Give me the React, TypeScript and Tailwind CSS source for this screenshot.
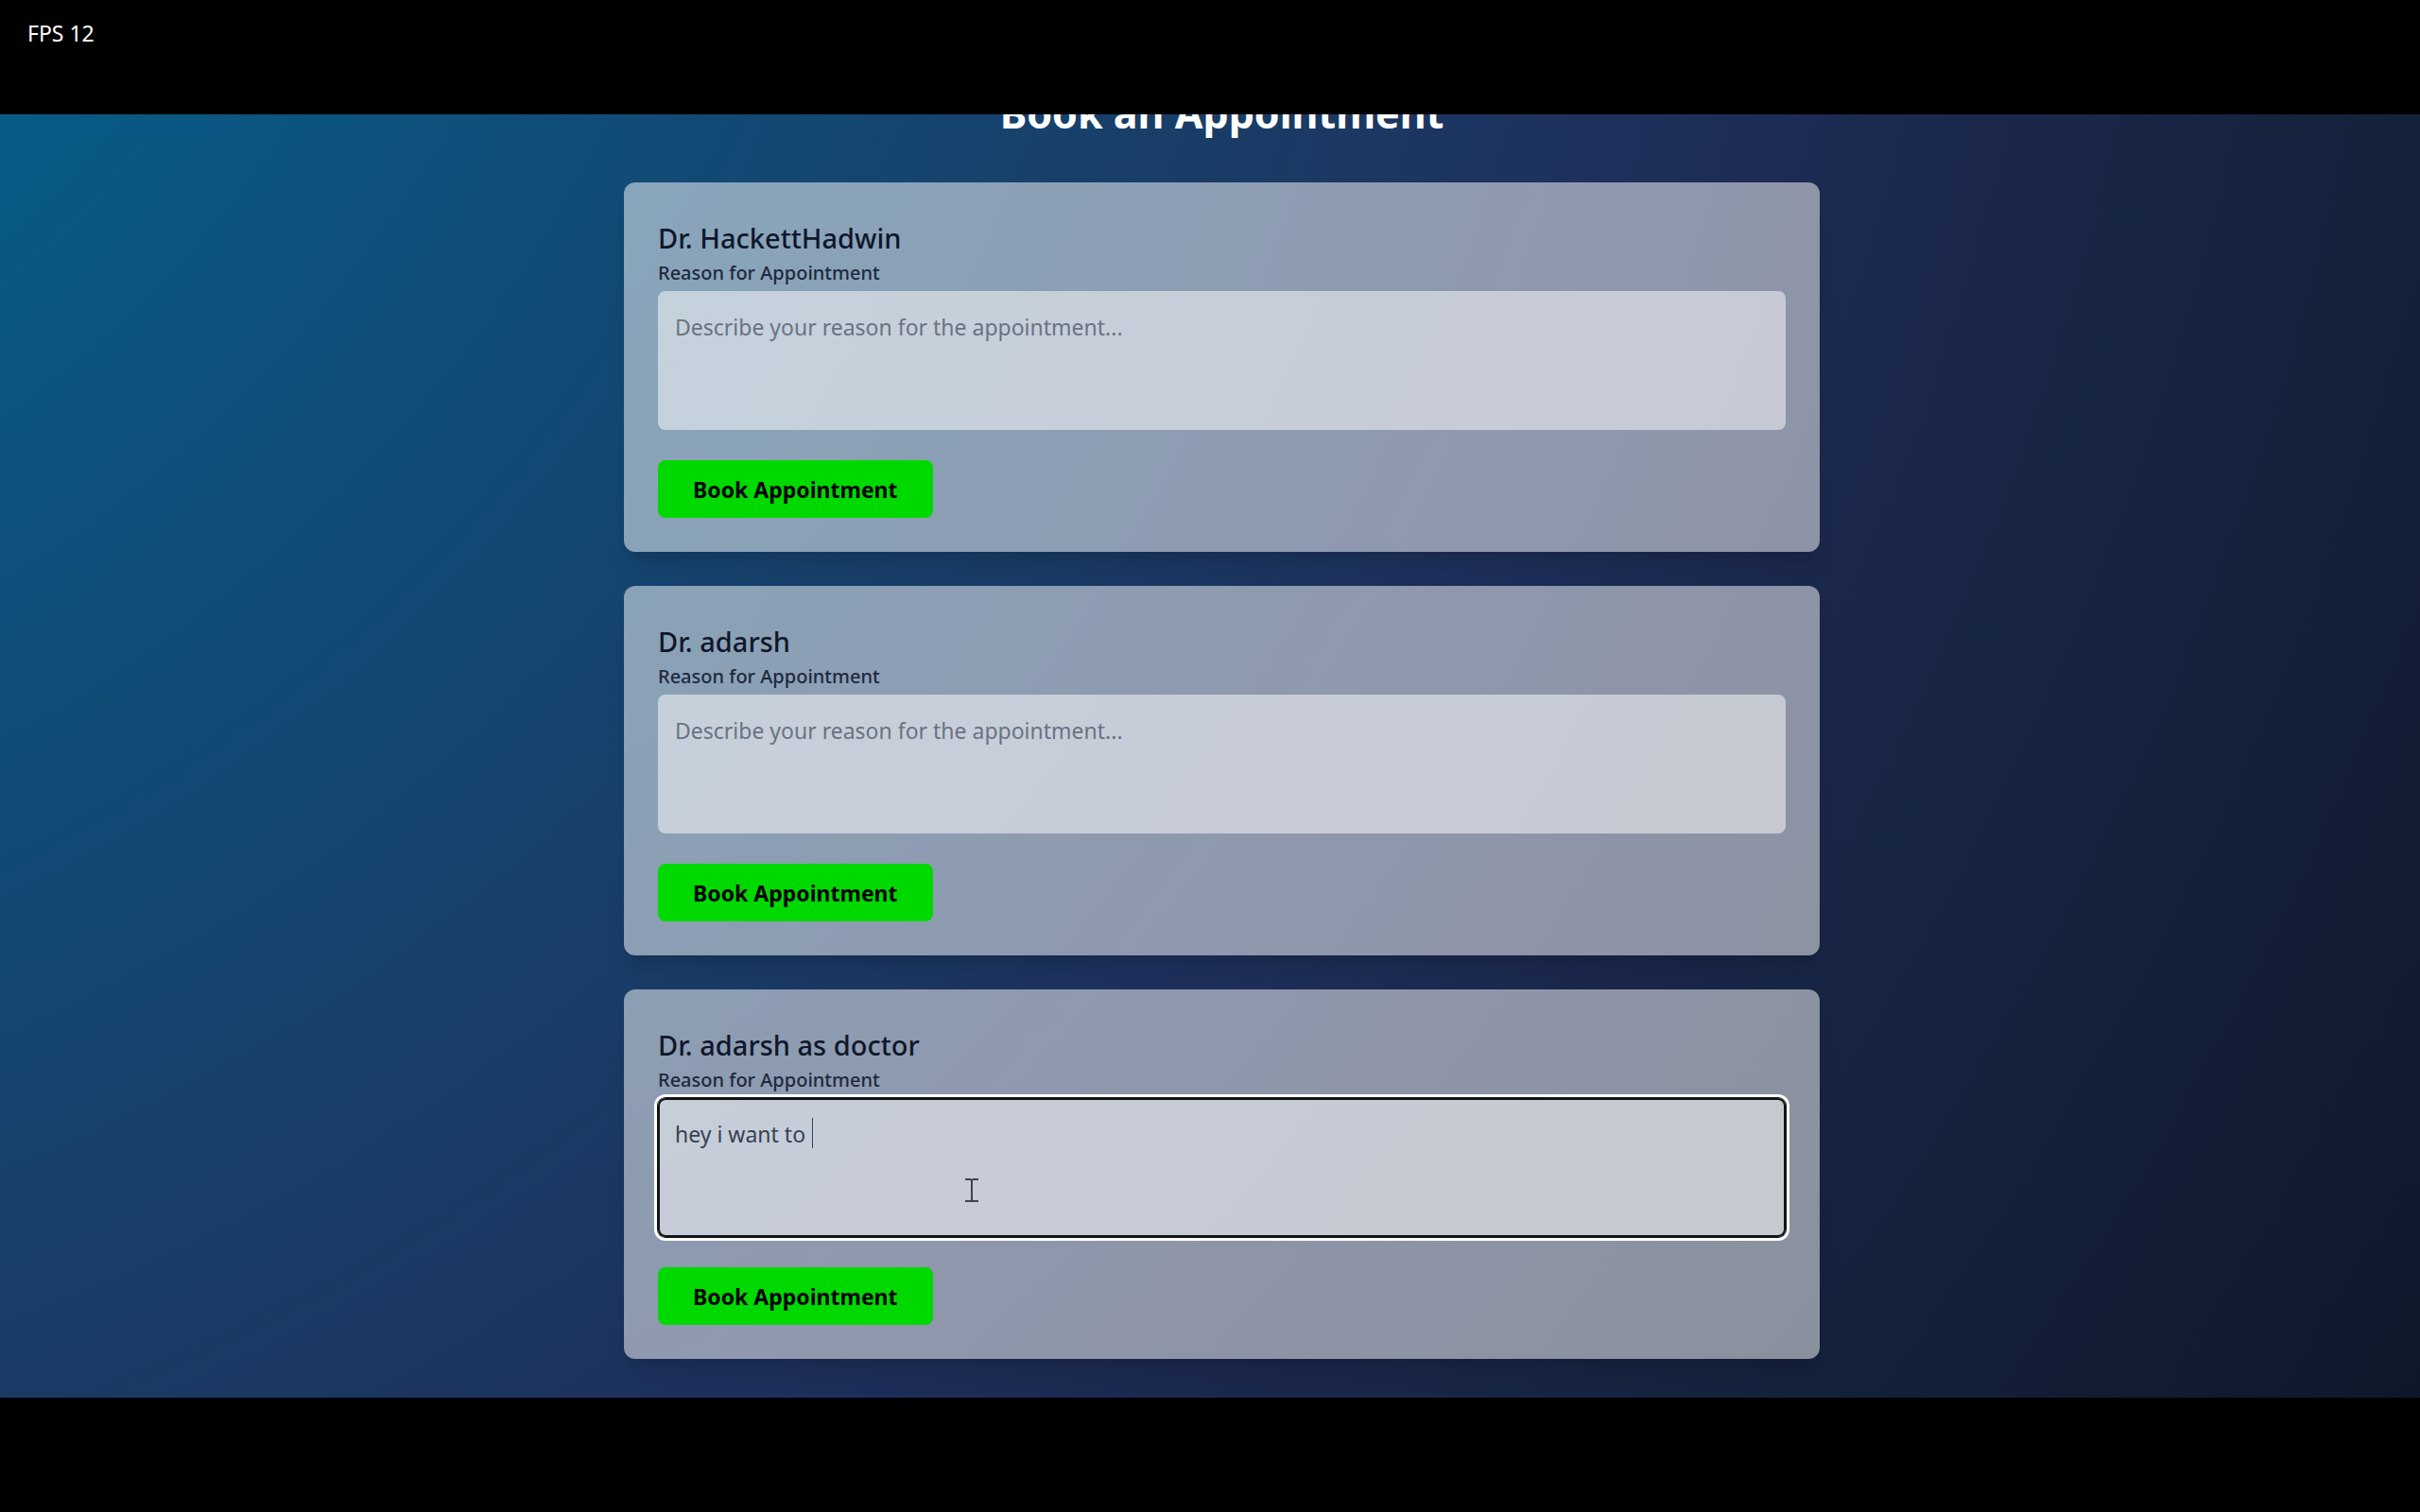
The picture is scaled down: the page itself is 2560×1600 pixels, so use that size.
import { useState } from 'react';

type Doctor = { id: string; name: string; reason: string; active?: boolean };

const doctors: Doctor[] = [
  { id: 'hackett', name: 'Dr. HackettHadwin', reason: '' },
  { id: 'adarsh', name: 'Dr. adarsh', reason: '' },
  { id: 'adarsh-doctor', name: 'Dr. adarsh as doctor', reason: 'hey i want to ', active: true },
];

function TextCursor() {
  return (
    <svg
      className="pointer-events-none absolute top-[84px] left-[324px] h-[27px] w-4"
      viewBox="0 0 16 27"
      fill="none"
      stroke="#3f4350"
      strokeWidth="2"
      aria-hidden="true"
    >
      <path d="M1 2H6.5L8 3L9.5 2H15M8 3V24M1 25H6.5L8 24L9.5 25H15" />
    </svg>
  );
}

function DoctorCard({ doctor }: { doctor: Doctor }) {
  const [reason, setReason] = useState(doctor.reason);
  const focusRing = doctor.active
    ? 'shadow-[0_0_0_1px_#101412,0_0_0_4px_#ffffff,inset_0_0_0_2px_#101412]'
    : '';
  return (
    <article className="rounded-xl bg-white/50 p-9 shadow-xl">
      <h2 className="text-[29px] leading-[46px] font-medium text-slate-900">{doctor.name}</h2>
      <label htmlFor={doctor.id} className="block text-[20px] leading-7 font-medium text-slate-800">
        Reason for Appointment
      </label>
      <div className="relative mt-[5px]">
        <textarea
          id={doctor.id}
          value={reason}
          onChange={(e) => setReason(e.target.value)}
          placeholder="Describe your reason for the appointment..."
          className={`block h-[147px] w-full resize-none rounded-lg bg-white/50 px-[18px] py-5 text-[23px] leading-9 text-gray-700 outline-none placeholder:text-gray-500 ${focusRing}`}
        />
        {doctor.active && (
          <>
            <span className="absolute top-[21px] left-[163px] h-8 w-px bg-slate-700" />
            <TextCursor />
          </>
        )}
      </div>
      <button
        type="button"
        className="mt-8 block rounded-lg bg-[#00d900] px-[37px] pt-0.5 text-[23px] leading-[59px] font-bold text-black"
      >
        Book Appointment
      </button>
    </article>
  );
}

export default function App() {
  return (
    <div className="flex min-h-screen flex-col bg-black font-['Noto_Sans',sans-serif]">
      <header className="h-[121px] px-[29px] pt-[17px] text-[23px] leading-9 text-white">FPS 12</header>
      <main className="flex-1 overflow-hidden bg-[radial-gradient(circle_at_-700px_-670px,#075b87_970px,#114b76_1550px,#193d67_2080px,#1e305c_2500px,#1b284d_2850px,#15233e_3220px,#0f172a_3840px)] pb-[38px] pl-[25px]">
        <div className="mx-auto max-w-[1265px]">
          <h1 className="-mt-[25px] mb-[49px] text-center text-[43px] leading-[48px] font-bold text-white">
            Book an Appointment
          </h1>
          <div className="flex flex-col gap-9">
            {doctors.map((d) => (
              <DoctorCard key={d.id} doctor={d} />
            ))}
          </div>
        </div>
      </main>
      <footer className="h-[121px]" />
    </div>
  );
}
